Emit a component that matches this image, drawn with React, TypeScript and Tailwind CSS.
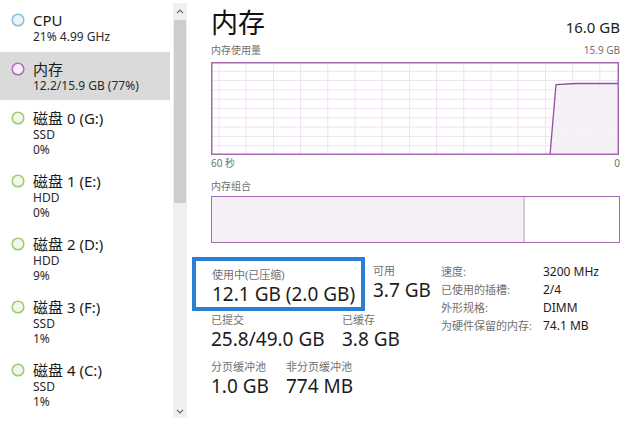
import React from "react";

const font = { fontFamily: '"Noto Sans", "Noto Sans CJK SC", sans-serif' };

type Item = { title: string; lines: string[]; ring: string; fill: string };

const disks: Item[] = [
  { title: "磁盘 0 (G:)", lines: ["SSD", "0%"], ring: "#9ccc72", fill: "#f1f8ea" },
  { title: "磁盘 1 (E:)", lines: ["HDD", "0%"], ring: "#9ccc72", fill: "#f1f8ea" },
  { title: "磁盘 2 (D:)", lines: ["HDD", "9%"], ring: "#9ccc72", fill: "#f1f8ea" },
  { title: "磁盘 3 (F:)", lines: ["SSD", "1%"], ring: "#9ccc72", fill: "#f1f8ea" },
  { title: "磁盘 4 (C:)", lines: ["SSD", "1%"], ring: "#9ccc72", fill: "#f1f8ea" },
];

function Ring({ ring, fill }: { ring: string; fill: string }) {
  return (
    <svg width="14" height="14" viewBox="0 0 14 14" className="shrink-0">
      <circle cx="7" cy="7" r="5.8" fill={fill} stroke={ring} strokeWidth="1.5" />
    </svg>
  );
}

function SideItem({ item, className }: { item: Item; className: string }) {
  return (
    <div className={`flex ${className}`}>
      <div className="w-[33px] flex justify-center pl-[2px]">
        <div className="h-[18px] flex items-center">
          <Ring ring={item.ring} fill={item.fill} />
        </div>
      </div>
      <div>
        <div className="text-[15px] leading-[18px] text-[#1a1a1a]">{item.title}</div>
        {item.lines.map((l) => (
          <div key={l + item.title} className="text-[12px] leading-[15px] text-[#2a2a2a]">
            {l}
          </div>
        ))}
      </div>
    </div>
  );
}

function Chart() {
  const w = 408;
  const h = 93;
  const vx = Array.from({ length: 15 }, (_, i) => 8 + 27.2 * i);
  const hy = Array.from({ length: 9 }, (_, i) => 9.3 * (i + 1));
  return (
    <svg width={w} height={h} className="block">
      <rect x="0" y="0" width={w} height={h} fill="#ffffff" />
      {vx.map((x) => (
        <line key={x} x1={x} y1="0" x2={x} y2={h} stroke="#efe2f1" strokeWidth="1" />
      ))}
      {hy.map((y) => (
        <line key={y} x1="0" y1={y} x2={w} y2={y} stroke="#efe2f1" strokeWidth="1" />
      ))}
      <polygon points={`339,${h} 345,22.5 365,21.5 ${w},21.5 ${w},${h}`} fill="#f4eef5" fillOpacity="0.85" />
      <polyline points={`339,${h} 345,22.5 365,21.5 ${w},21.5`} fill="none" stroke="#8e4f9c" strokeWidth="1.3" />
      <rect x="0.75" y="0.75" width={w - 1.5} height={h - 1.5} fill="none" stroke="#a36aae" strokeWidth="1.5" />
    </svg>
  );
}

function Stat({ label, value, className = "" }: { label: string; value: string; className?: string }) {
  return (
    <div className={className}>
      <div className="text-[11px] leading-[15px] text-[#707070]">{label}</div>
      <div className="text-[19px] leading-[24px] text-[#1c1c1c] whitespace-nowrap">{value}</div>
    </div>
  );
}

export default function App() {
  return (
    <div style={font} className="w-[640px] h-[424px] bg-white flex overflow-hidden">
      <div className="w-[170px] shrink-0">
        <SideItem
          item={{ title: "CPU", lines: ["21% 4.99 GHz"], ring: "#8fbcd6", fill: "#eaf3f9" }}
          className="h-[52px] pt-[11px]"
        />
        <SideItem
          item={{ title: "内存", lines: ["12.2/15.9 GB (77%)"], ring: "#b26cbd", fill: "#f8eefa" }}
          className="h-[48px] pt-[8px] bg-[#dadada]"
        />
        <div className="mt-[2px]">
          {disks.map((d) => (
            <SideItem key={d.title} item={d} className="h-[63px] pt-[7px]" />
          ))}
        </div>
      </div>

      <div className="w-[14px] shrink-0 ml-[3px] mt-[3px] h-[415px] bg-[#f0f0f0] flex flex-col items-center">
        <div className="h-[17px] flex items-center text-[#606060]">
          <svg width="8" height="5" viewBox="0 0 8 5">
            <path d="M1 4.2 L4 1.2 L7 4.2" fill="none" stroke="currentColor" strokeWidth="1.2" />
          </svg>
        </div>
        <div className="w-[12px] h-[183px] bg-[#cdcdcd]" />
        <div className="flex-1" />
        <div className="h-[14px] flex items-center text-[#606060]">
          <svg width="8" height="5" viewBox="0 0 8 5">
            <path d="M1 0.8 L4 3.8 L7 0.8" fill="none" stroke="currentColor" strokeWidth="1.2" />
          </svg>
        </div>
      </div>

      <div className="flex-1 pl-[24px] pr-[20px]">
        <div className="flex items-end justify-between h-[40px] pt-[6px]">
          <div className="text-[27px] leading-[34px] text-[#111]">内存</div>
          <div className="text-[15px] leading-[20px] text-[#1c1c1c] mb-[3px]">16.0 GB</div>
        </div>
        <div className="flex justify-between text-[10px] leading-[16px] text-[#707070] mt-[2px]">
          <span>内存使用量</span>
          <span>15.9 GB</span>
        </div>
        <div className="mt-[4px]">
          <Chart />
        </div>
        <div className="flex justify-between text-[10px] leading-[14px] text-[#707070] mt-[1px]">
          <span>60 秒</span>
          <span>0</span>
        </div>
        <div className="text-[10px] leading-[14px] text-[#707070] mt-[9px]">内存组合</div>
        <div className="mt-[3px] h-[47px] border-[1.5px] border-[#a36aae] flex">
          <div className="w-[313px] bg-[#f4f0f5] border-r-[2px] border-[#d9c3dd]" />
          <div className="flex-1 bg-white" />
        </div>

        <div className="flex mt-[14px]">
          <div className="w-[230px]">
            <div className="flex items-start">
              <div className="-ml-[19px] w-[173px] h-[54px] border-[4px] border-[#2a7ed3] pl-[16px] pt-[6px]">
                <Stat label="使用中(已压缩)" value="12.1 GB (2.0 GB)" />
              </div>
              <Stat label="可用" value="3.7 GB" className="ml-[8px] pt-[6px]" />
            </div>
            <div className="flex mt-[1px]">
              <Stat label="已提交" value="25.8/49.0 GB" className="w-[131px]" />
              <Stat label="已缓存" value="3.8 GB" />
            </div>
            <div className="flex mt-[8px]">
              <Stat label="分页缓冲池" value="1.0 GB" className="w-[75px]" />
              <Stat label="非分页缓冲池" value="774 MB" />
            </div>
          </div>
          <div className="pt-[6px] text-[11px] leading-[18px]">
            {[
              ["速度:", "3200 MHz"],
              ["已使用的插槽:", "2/4"],
              ["外形规格:", "DIMM"],
              ["为硬件保留的内存:", "74.1 MB"],
            ].map(([k, v]) => (
              <div key={k} className="flex">
                <span className="w-[102px] text-[#707070]">{k}</span>
                <span className="text-[12px] text-[#1c1c1c]">{v}</span>
              </div>
            ))}
          </div>
        </div>
      </div>
    </div>
  );
}
